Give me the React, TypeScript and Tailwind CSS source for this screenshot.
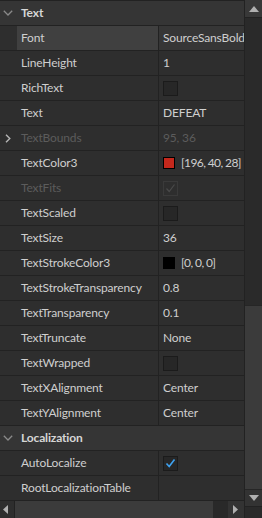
import React from "react"

type Row =
  | { kind: "header"; label: string }
  | {
      kind: "prop"
      label: string
      value?: string
      type?: "text" | "check" | "color"
      checked?: boolean
      color?: string
      disabled?: boolean
      expandable?: boolean
      selected?: boolean
    }

const rows: Row[] = [
  { kind: "header", label: "Text" },
  { kind: "prop", label: "Font", value: "SourceSansBold", selected: true },
  { kind: "prop", label: "LineHeight", value: "1" },
  { kind: "prop", label: "RichText", type: "check" },
  { kind: "prop", label: "Text", value: "DEFEAT" },
  { kind: "prop", label: "TextBounds", value: "95, 36", disabled: true, expandable: true },
  { kind: "prop", label: "TextColor3", type: "color", color: "#c4281c", value: "[196, 40, 28]" },
  { kind: "prop", label: "TextFits", type: "check", checked: true, disabled: true },
  { kind: "prop", label: "TextScaled", type: "check" },
  { kind: "prop", label: "TextSize", value: "36" },
  { kind: "prop", label: "TextStrokeColor3", type: "color", color: "#000000", value: "[0, 0, 0]" },
  { kind: "prop", label: "TextStrokeTransparency", value: "0.8" },
  { kind: "prop", label: "TextTransparency", value: "0.1" },
  { kind: "prop", label: "TextTruncate", value: "None" },
  { kind: "prop", label: "TextWrapped", type: "check" },
  { kind: "prop", label: "TextXAlignment", value: "Center" },
  { kind: "prop", label: "TextYAlignment", value: "Center" },
  { kind: "header", label: "Localization" },
  { kind: "prop", label: "AutoLocalize", type: "check", checked: true },
  { kind: "prop", label: "RootLocalizationTable", value: "" },
]

function Checkbox({ checked, disabled }: { checked?: boolean; disabled?: boolean }) {
  return (
    <div
      className={
        disabled
          ? "w-[15px] h-[15px] border border-[#3a3a3a] bg-[#2e2e2e] flex items-center justify-center"
          : "w-[15px] h-[15px] border border-[#1b1b1b] bg-[#272727] flex items-center justify-center"
      }
    >
      {checked && (
        <svg width="11" height="11" viewBox="0 0 11 11">
          <path
            d="M1.5 5.5 L4.2 8.5 L9.5 1.5"
            fill="none"
            stroke={disabled ? "#4a4a4a" : "#3ea2f0"}
            strokeWidth={disabled ? 1.2 : 1.6}
          />
        </svg>
      )}
    </div>
  )
}

function PropRow({ row }: { row: Extract<Row, { kind: "prop" }> }) {
  const textColor = row.disabled ? "text-[#5c5c5c]" : "text-[#cfcfcf]"
  return (
    <div className="h-[25px] flex border-t border-[#222222]">
      <div className="w-[17px] flex items-center justify-center">
        {row.expandable && (
          <svg width="6" height="9" viewBox="0 0 6 9" className="ml-[-2px]">
            <path d="M1 0.8 L4.8 4.5 L1 8.2" fill="none" stroke="#b5b5b5" strokeWidth="1.4" />
          </svg>
        )}
      </div>
      <div
        className={`w-[142px] pl-[4px] flex items-center border-r border-[#222222] whitespace-nowrap overflow-hidden ${textColor} ${
          row.selected ? "bg-[#404040]" : ""
        }`}
      >
        {row.label}
      </div>
      <div
        className={`flex-1 pl-[4px] flex items-center gap-[6px] whitespace-nowrap overflow-hidden ${textColor} ${
          row.selected ? "bg-[#363636]" : ""
        }`}
      >
        {row.type === "check" && <Checkbox checked={row.checked} disabled={row.disabled} />}
        {row.type === "color" && (
          <div className="w-[12px] h-[12px] border border-black shrink-0" style={{ backgroundColor: row.color }} />
        )}
        {row.type === "color" && <span className="tracking-[-0.6px]">{row.value}</span>}
        {(row.type === undefined || row.type === "text") && <span>{row.value}</span>}
      </div>
    </div>
  )
}

function HeaderRow({ label }: { label: string }) {
  return (
    <div className="h-[25px] flex items-center border-t border-[#222222] bg-[#353535]">
      <div className="w-[21px] flex items-center justify-center">
        <svg width="10" height="6" viewBox="0 0 10 6" className="ml-[-5px]">
          <path d="M0.8 0.8 L5 5 L9.2 0.8" fill="none" stroke="#8a8a8a" strokeWidth="1.3" />
        </svg>
      </div>
      <span className="font-bold text-[#d6d6d6]">{label}</span>
    </div>
  )
}

export default function App() {
  return (
    <div className="w-[262px] h-[518px] bg-[#2e2e2e] flex overflow-hidden text-[12px] tracking-[-0.15px] font-['Lato','Noto_Sans',sans-serif] select-none">
      <div className="w-[244px] flex flex-col">
        <div className="flex flex-col">
          {rows.map((row, i) =>
            row.kind === "header" ? <HeaderRow key={i} label={row.label} /> : <PropRow key={i} row={row} />
          )}
        </div>
        <div className="h-[18px] flex border-t border-[#222222] mt-auto">
          <div className="w-[15px] flex items-center justify-center border-r border-[#222222]">
            <svg width="5" height="9" viewBox="0 0 5 9" className="ml-[-3px]">
              <path d="M5 0 L0 4.5 L5 9 Z" fill="#b0b0b0" />
            </svg>
          </div>
          <div className="w-[198px] bg-[#3b3b3b]" />
          <div className="flex-1 bg-[#292929]" />
          <div className="w-[16px] flex items-center justify-center bg-[#333333]">
            <svg width="5" height="9" viewBox="0 0 5 9" className="ml-[-2px]">
              <path d="M0 0 L5 4.5 L0 9 Z" fill="#b0b0b0" />
            </svg>
          </div>
        </div>
      </div>
      <div className="w-[18px] flex flex-col border-l border-[#222222]">
        <div className="h-[18px] bg-[#383838] flex items-center justify-center border-b border-[#222222]">
          <svg width="10" height="6" viewBox="0 0 10 6">
            <path d="M0 6 L5 0 L10 6 Z" fill="#b0b0b0" />
          </svg>
        </div>
        <div className="h-[287px] bg-[#2a2a2a]" />
        <div className="flex-1 bg-[#3b3b3b] border-y border-[#262626]" />
        <div className="h-[16px] bg-[#333333] flex items-center justify-center">
          <svg width="10" height="6" viewBox="0 0 10 6">
            <path d="M0 0 L5 6 L10 0 Z" fill="#b0b0b0" />
          </svg>
        </div>
        <div className="h-[12px] bg-[#2a2a2a] border-t border-[#222222]" />
      </div>
    </div>
  )
}
